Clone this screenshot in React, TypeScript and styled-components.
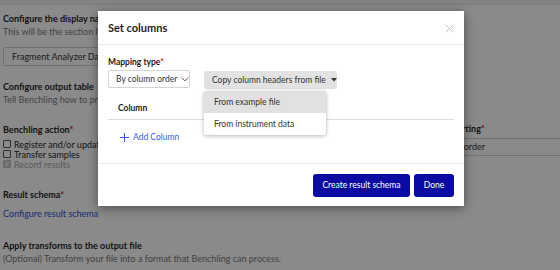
import styled, { createGlobalStyle } from 'styled-components';

const GlobalStyle = createGlobalStyle`
  html, body {
    margin: 0;
    padding: 0;
    background: #ffffff;
    font-family: Lato, 'Open Sans', sans-serif;
  }
`;

const Page = styled.div`
  position: relative;
  width: 560px;
  height: 270px;
  overflow: hidden;
  background: #ffffff;
`;

const TopBar = styled.div`
  height: 4px;
  background: #f2f2f2;
  border-bottom: 1px solid #e6e6e6;
`;

const Content = styled.div`
  padding: 7px 0 0 3px;
  display: flex;
  flex-direction: column;
`;

const Section = styled.div<{ $gap?: number }>`
  display: flex;
  flex-direction: column;
  margin-bottom: ${(p) => p.$gap ?? 0}px;
`;

const Heading = styled.div`
  font-size: 9px;
  line-height: 13px;
  font-weight: 700;
  color: #1f1f1f;
  white-space: nowrap;
`;

const Help = styled.div`
  font-size: 9px;
  line-height: 13px;
  color: #7a7a7a;
  white-space: nowrap;
`;

const Req = styled.span`
  color: #c81e1e;
`;

const TextInput = styled.div<{ $width: number }>`
  margin-top: 9px;
  width: ${(p) => p.$width}px;
  height: 19px;
  box-sizing: border-box;
  border: 1px solid #d0d0d0;
  border-radius: 2px;
  padding: 0 8px;
  font-size: 9px;
  line-height: 17px;
  color: #333;
  white-space: nowrap;
`;

const TwoCol = styled.div`
  display: grid;
  grid-template-columns: 430px 1fr;
  margin-bottom: 19px;
`;

const CheckList = styled.div`
  display: flex;
  flex-direction: column;
  margin-top: 3px;
`;

const CheckRow = styled.label<{ $disabled?: boolean }>`
  display: flex;
  align-items: center;
  gap: 3px;
  height: 10px;
  font-size: 9px;
  color: ${(p) => (p.$disabled ? '#a8a8a8' : '#2a2a2a')};
  white-space: nowrap;
`;

const Box = styled.span<{ $checked?: boolean }>`
  width: 8px;
  height: 8px;
  box-sizing: border-box;
  border: 1px solid ${(p) => (p.$checked ? '#bdbdbd' : '#555')};
  background: ${(p) => (p.$checked ? '#cfcfcf' : '#fff')};
  border-radius: 1px;
  display: inline-flex;
  align-items: center;
  justify-content: center;
  color: #fff;
  font-size: 7px;
`;

const SideField = styled.div`
  display: flex;
  flex-direction: column;
  margin-top: -1px;
`;

const SideInput = styled.div`
  margin-top: 3px;
  height: 18px;
  box-sizing: border-box;
  border-top: 1px solid #d0d0d0;
  border-bottom: 1px solid #d0d0d0;
  padding-left: 4px;
  font-size: 9px;
  line-height: 16px;
  color: #333;
  white-space: nowrap;
`;

const Link = styled.div`
  font-size: 9px;
  line-height: 13px;
  color: #2a4fd6;
  margin-top: 6px;
`;

const Overlay = styled.div`
  position: absolute;
  inset: 0;
  background: rgba(0, 0, 0, 0.46);
`;

const Modal = styled.div`
  position: absolute;
  left: 98px;
  top: 11px;
  width: 366px;
  height: 195px;
  background: #fff;
  box-shadow: 0 2px 10px rgba(0, 0, 0, 0.45);
  display: flex;
  flex-direction: column;
`;

const ModalHeader = styled.div`
  height: 34px;
  box-sizing: border-box;
  border-bottom: 1px solid #e6e6e6;
  display: flex;
  align-items: center;
  justify-content: space-between;
  padding: 0 10px 0 10px;
`;

const ModalTitle = styled.div`
  font-size: 11px;
  font-weight: 700;
  color: #1e1e1e;
`;

const Close = styled.div`
  color: #c4c4c4;
  display: flex;
  margin-top: 1px;
`;

const ModalBody = styled.div`
  flex: 1;
  padding: 11px 10px 0 10px;
  border-bottom: 1px solid #ececec;
`;

const FieldLabel = styled.div`
  font-size: 8.5px;
  line-height: 12px;
  font-weight: 700;
  color: #222;
`;

const Controls = styled.div`
  display: flex;
  align-items: flex-start;
  gap: 14px;
  margin-top: 2px;
`;

const Select = styled.div`
  width: 82px;
  height: 18px;
  box-sizing: border-box;
  border: 1px solid #d4d4d4;
  border-radius: 2px;
  display: flex;
  align-items: center;
  gap: 4px;
  padding-left: 7px;
  font-size: 8.5px;
  color: #333;
  white-space: nowrap;
`;

const MenuWrap = styled.div`
  position: relative;
  margin-top: 1px;
`;

const MenuButton = styled.div`
  height: 18px;
  width: 133px;
  box-sizing: border-box;
  background: #e2e2e2;
  border-radius: 3px;
  display: flex;
  align-items: center;
  gap: 5px;
  padding-left: 8px;
  font-size: 8.5px;
  color: #333;
  white-space: nowrap;
`;

const Menu = styled.div`
  position: absolute;
  left: 0;
  top: 20px;
  width: 122px;
  background: #fff;
  box-shadow: 0 1px 4px rgba(0, 0, 0, 0.3);
  border-radius: 2px;
  z-index: 2;
`;

const MenuItem = styled.div<{ $active?: boolean }>`
  height: 22px;
  display: flex;
  align-items: center;
  padding-left: 10px;
  font-size: 8.5px;
  color: #333;
  background: ${(p) => (p.$active ? '#e1e1e1' : 'transparent')};
`;

const ColumnHead = styled.div`
  margin-top: 11px;
  height: 20px;
  box-sizing: border-box;
  border-bottom: 1px solid #dedede;
  padding-left: 10px;
  font-size: 8.5px;
  font-weight: 700;
  color: #222;
  line-height: 17px;
`;

const AddColumn = styled.div`
  margin-top: 12px;
  padding-left: 12px;
  display: flex;
  align-items: center;
  gap: 4px;
  font-size: 8.5px;
  color: #3a5ce6;
`;

const Footer = styled.div`
  height: 42px;
  display: flex;
  justify-content: flex-end;
  align-items: center;
  gap: 4px;
  padding: 0 10px;
`;

const PrimaryButton = styled.button<{ $width: number }>`
  width: ${(p) => p.$width}px;
  height: 23px;
  border: none;
  border-radius: 3px;
  background: #0b0ba3;
  color: #fff;
  font-family: Lato, 'Open Sans', sans-serif;
  font-size: 8.5px;
  padding: 0;
`;

export default function App() {
  return (
    <>
      <GlobalStyle />
      <Page>
        <TopBar />
        <Content>
          <Section $gap={14}>
            <Heading>Configure the display name</Heading>
            <Help>This will be the section header shown in the run</Help>
            <TextInput $width={380}>Fragment Analyzer Data</TextInput>
          </Section>
          <Section $gap={17}>
            <Heading>Configure output table</Heading>
            <Help>Tell Benchling how to process the output file</Help>
          </Section>
          <TwoCol>
            <Section>
              <Heading>
                Benchling action<Req>*</Req>
              </Heading>
              <CheckList>
                <CheckRow>
                  <Box />
                  Register and/or update entities
                </CheckRow>
                <CheckRow>
                  <Box />
                  Transfer samples
                </CheckRow>
                <CheckRow $disabled>
                  <Box $checked>✓</Box>
                  Record results
                </CheckRow>
              </CheckList>
            </Section>
            <SideField>
              <Heading>
                Row sorting<Req>*</Req>
              </Heading>
              <SideInput>By file order</SideInput>
            </SideField>
          </TwoCol>
          <Section $gap={19}>
            <Heading>
              Result schema<Req>*</Req>
            </Heading>
            <Link>Configure result schema</Link>
          </Section>
          <Section>
            <Heading>Apply transforms to the output file</Heading>
            <Help>(Optional) Transform your file into a format that Benchling can process.</Help>
          </Section>
        </Content>

        <Overlay />

        <Modal>
          <ModalHeader>
            <ModalTitle>Set columns</ModalTitle>
            <Close>
              <svg width="9" height="9" viewBox="0 0 9 9">
                <path d="M0.5 0.5 L8.5 8.5 M8.5 0.5 L0.5 8.5" stroke="currentColor" strokeWidth="1" />
              </svg>
            </Close>
          </ModalHeader>
          <ModalBody>
            <FieldLabel>
              Mapping type<Req>*</Req>
            </FieldLabel>
            <Controls>
              <Select>
                By column order
                <svg width="8" height="5" viewBox="0 0 8 5">
                  <path d="M0.5 0.5 L4 4 L7.5 0.5" stroke="#555" strokeWidth="1" fill="none" />
                </svg>
              </Select>
              <MenuWrap>
                <MenuButton>
                  Copy column headers from file
                  <svg width="6" height="4" viewBox="0 0 6 4">
                    <path d="M0 0 L6 0 L3 3.5 Z" fill="#333" />
                  </svg>
                </MenuButton>
                <Menu>
                  <MenuItem $active>From example file</MenuItem>
                  <MenuItem>From instrument data</MenuItem>
                </Menu>
              </MenuWrap>
            </Controls>
            <ColumnHead>Column</ColumnHead>
            <AddColumn>
              <svg width="9" height="9" viewBox="0 0 9 9">
                <path d="M4.5 0 V9 M0 4.5 H9" stroke="currentColor" strokeWidth="1" />
              </svg>
              Add Column
            </AddColumn>
          </ModalBody>
          <Footer>
            <PrimaryButton $width={97}>Create result schema</PrimaryButton>
            <PrimaryButton $width={40}>Done</PrimaryButton>
          </Footer>
        </Modal>
      </Page>
    </>
  );
}
